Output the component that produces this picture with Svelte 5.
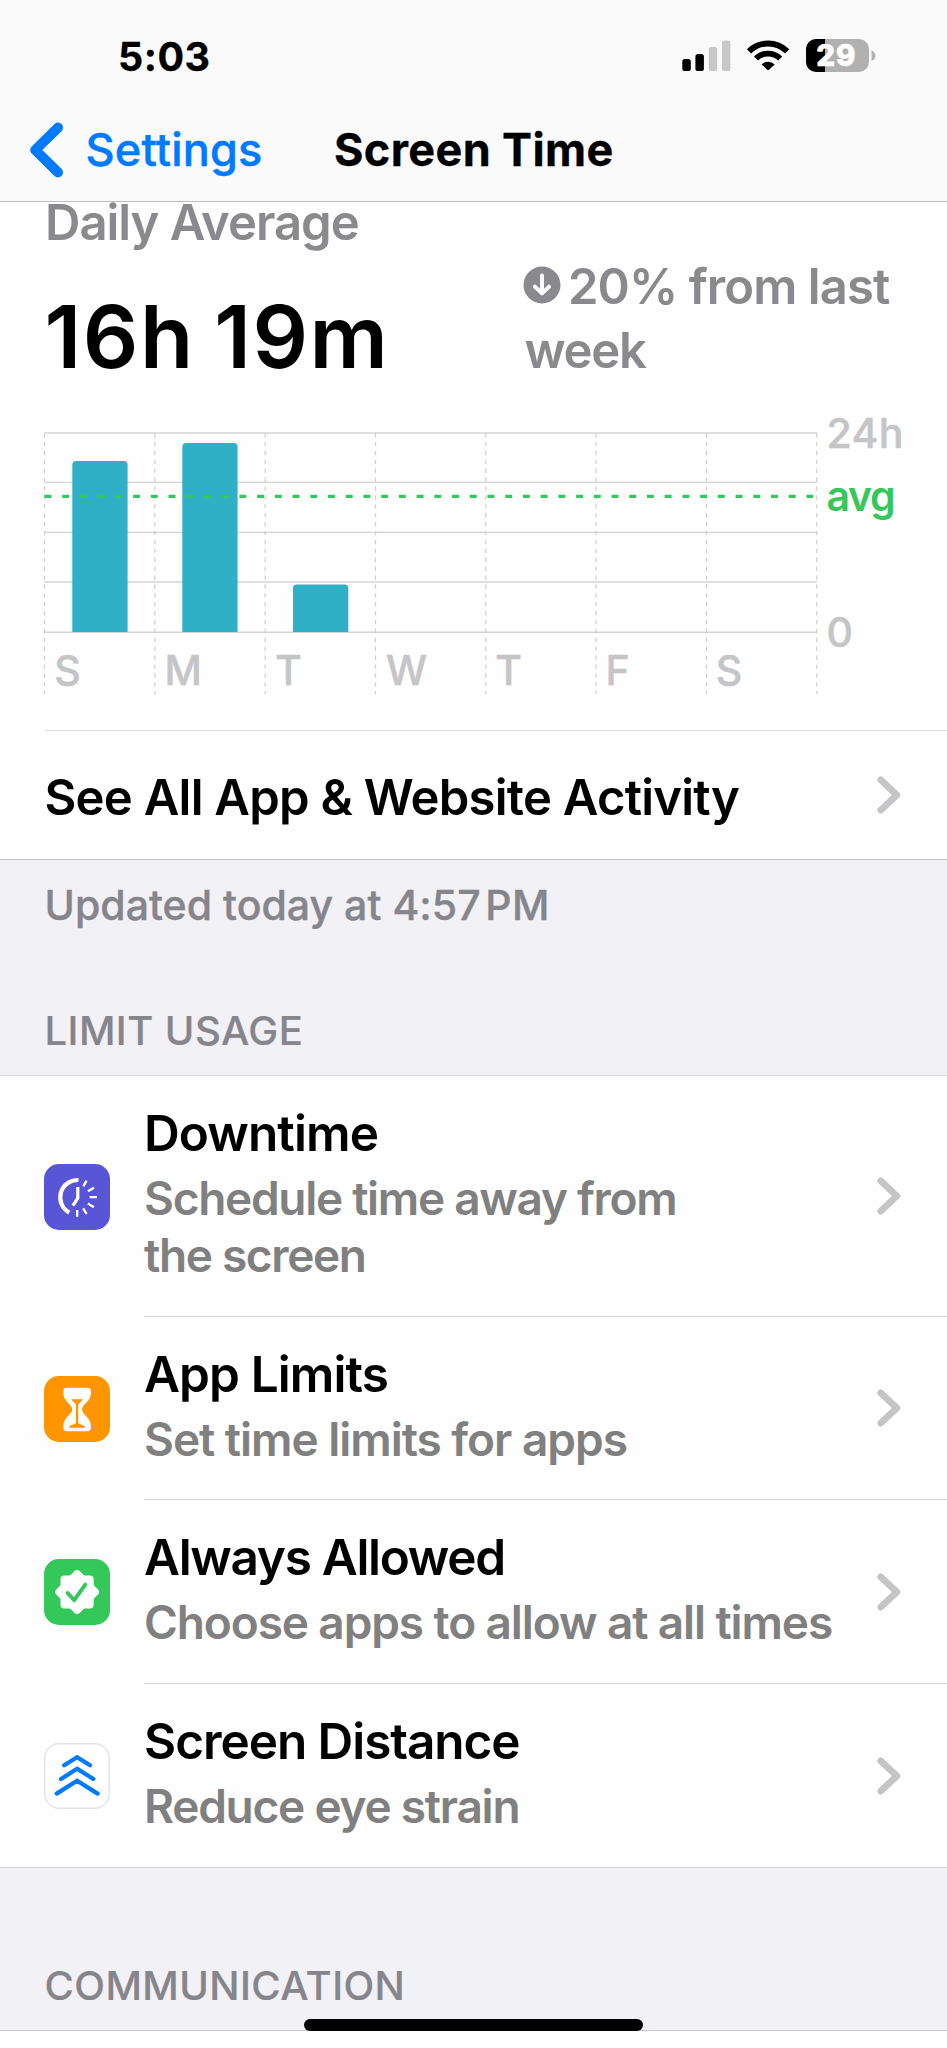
<script>
  const left = 44.5;
  const step = 110.33;
  const base = 632;
  const columns = Array.from({ length: 8 }, (_, i) => left + i * step);
  const gridLines = [433, 482.4, 532.4, 582, 632.3];
  const days = [
    { label: 'S', x: 54.3 },
    { label: 'M', x: 164.6 },
    { label: 'T', x: 275 },
    { label: 'W', x: 386 },
    { label: 'T', x: 495.2 },
    { label: 'F', x: 605.4 },
    { label: 'S', x: 715.8 }
  ];
  const bars = [
    { x: 72.3, top: 461 },
    { x: 182.3, top: 443 },
    { x: 293, top: 584.5 }
  ];

  const limits = [
    { icon: 'downtime', title: 'Downtime', ts: -0.9, lines: [['Schedule time away from', -1.29], ['the screen', -1.35]], height: 241 },
    { icon: 'limits', title: 'App Limits', ts: -0.9, lines: [['Set time limits for apps', -1.02]], height: 183 },
    { icon: 'allowed', title: 'Always Allowed', ts: -1.3, lines: [['Choose apps to allow at all times', -1.11]], height: 184 },
    { icon: 'distance', title: 'Screen Distance', ts: -1.05, lines: [['Reduce eye strain', -1.24]], height: 183 }
  ];
</script>

{#snippet chevron()}
  <svg class="chevron" width="24" height="38" viewBox="0 0 24 38">
    <path d="M3.8 3.9 19.8 19 3.8 34.1" fill="none" stroke="#c5c5c7" stroke-width="6.8" stroke-linecap="round" stroke-linejoin="round" />
  </svg>
{/snippet}

{#snippet icon(name)}
  <svg class="icon" width="66" height="66" viewBox="0 0 66 66">
    {#if name === 'downtime'}
      <rect width="66" height="66" rx="15" fill="#5856d6" />
      <g fill="none" stroke="#fff">
        <path d="M34.5 16A17.4 17.4 0 0 0 25.2 48.6" stroke-width="4.2" />
        <path d="M33.8 23V34.2L28.9 41.6" stroke-width="3.2" stroke-linejoin="round" />
        <path d="M33.2 46V52.8M39.2 44.3 42.6 50M43.9 39.6 49.9 43.2M45.6 33.2H52.8M43.9 27.3 49.9 23.8M39.3 22.4 42.6 16.6" stroke-width="2.3" />
      </g>
    {:else if name === 'limits'}
      <rect width="66" height="66" rx="15" fill="#ff9500" />
      <path fill="#fff" d="M22.7 11.8H43.5Q46.9 11.8 46.9 15.2V17C46.9 25.5 38 28.5 38 33.5S46.9 41.5 46.9 50V51.8Q46.9 55.2 43.5 55.2H22.7Q19.3 55.2 19.3 51.8V50C19.3 41.5 28.2 38.5 28.2 33.5S19.3 25.5 19.3 17V15.2Q19.3 11.8 22.7 11.8Z" />
      <path fill="#ff9500" d="M27.3 23.2H38.9C37.5 26 34.6 27 34.2 28.8V46.8C34.6 48.2 40.6 48.8 41.6 51.8H24.6C25.6 48.8 31.6 48.2 32 46.8V28.8C31.6 27 28.7 26 27.3 23.2Z" />
    {:else if name === 'allowed'}
      <rect width="66" height="66" rx="15" fill="#34c759" />
      <rect x="16.5" y="16.4" width="33.2" height="33.2" rx="4" fill="#fff" />
      <rect x="16.5" y="16.4" width="33.2" height="33.2" rx="4" fill="#fff" transform="rotate(45 33.1 33)" />
      <path d="M23.6 34 30.2 41.2 41.3 25.6" fill="none" stroke="#34c759" stroke-width="3.9" stroke-linecap="round" stroke-linejoin="round" />
    {:else}
      <rect x=".75" y=".75" width="64.5" height="64.5" rx="14.5" fill="#fff" stroke="#e5e5e7" stroke-width="1.5" />
      <g fill="none" stroke="#007aff" stroke-width="4.2" stroke-linecap="round">
        <path d="M20.2 22.3 33.1 14.2 46 22.3M17 36 33.1 25.7 49.4 36M12.7 50.6 33.1 37.8 53.6 50.6" />
      </g>
    {/if}
  </svg>
{/snippet}

<div class="screen">
  <header>
    <div class="status">
      <span class="time">5:03</span>
      <svg class="indicators" width="200" height="40" viewBox="680 36 200 40">
        <rect x="682.3" y="59" width="8.5" height="12" rx="2.6" />
        <rect x="695.4" y="54" width="8.5" height="17" rx="2.6" />
        <rect x="708.8" y="47" width="8.4" height="24" rx="2.6" fill="#c7c7c7" />
        <rect x="722" y="40.5" width="8.4" height="30.5" rx="2.6" fill="#c7c7c7" />
        <g fill="none" stroke="#000">
          <path d="M749 51.3A27.3 27.3 0 0 1 787.2 51.3" stroke-width="6" />
          <path d="M756 58.5A17.4 17.4 0 0 1 780.2 58.5" stroke-width="5.8" />
        </g>
        <path d="M761.6 64.4A9.4 9.4 0 0 1 774.6 64.4L769 69.8Q768.1 70.6 767.2 69.8Z" />
        <rect x="806" y="39" width="63" height="33" rx="10" fill="#b1b1b1" />
        <path d="M825 39V72H816A10 10 0 0 1 806 62V49A10 10 0 0 1 816 39Z" />
        <path d="M871.5 50.3Q875.4 52 875.4 55.7T871.5 61Z" fill="#b1b1b1" />
        <text x="816.2" y="66.2" fill="#fff" stroke="#fff" stroke-width=".6" font-size="29.5" font-weight="800" letter-spacing="1">29</text>
      </svg>
    </div>
    <nav>
      <svg width="36" height="56" viewBox="0 0 36 56">
        <path d="M29 5.6 6.2 28 29 50.4" fill="none" stroke="#007aff" stroke-width="10" stroke-linecap="round" stroke-linejoin="round" />
      </svg>
      <span class="back">Settings</span>
      <h1>Screen Time</h1>
    </nav>
  </header>

  <section class="summary">
    <div class="caption">Daily Average</div>
    <div class="figures">
      <div class="total">16h 19m</div>
      <div class="change">
        <div class="change-line">
          <svg width="38" height="38" viewBox="0 0 38 38">
            <circle cx="19" cy="19" r="18.5" fill="#8a8a8e" />
            <path d="M19 9.5V27M11.8 20.6 19 27.4 26.2 20.6" fill="none" stroke="#fff" stroke-width="4" stroke-linecap="round" stroke-linejoin="round" />
          </svg>
          <span>20% from last</span>
        </div>
        <div class="week">week</div>
      </div>
    </div>

    <svg class="chart" width="947" height="344" viewBox="0 386 947 344">
      {#each gridLines as y}
        <line x1={left} x2="817" y1={y} y2={y} stroke="#d4d4d6" stroke-width="1.4" />
      {/each}
      {#each columns as x}
        <line x1={x} x2={x} y1="433" y2="694" stroke="#cfcfd1" stroke-width="1.2" stroke-dasharray="4.4 4.5" />
      {/each}
      {#each bars as b}
        <path d="M{b.x} {base}V{b.top + 4}Q{b.x} {b.top} {b.x + 4} {b.top}H{b.x + 51.3}Q{b.x + 55.3} {b.top} {b.x + 55.3} {b.top + 4}V{base}Z" fill="#30b0c7" />
      {/each}
      <line x1={left} x2="813" y1="496.4" y2="496.4" stroke="#34c759" stroke-width="3.4" stroke-dasharray="6.9 10.82" />
      {#each days as d}
        <text x={d.x} y="685" class="tick">{d.label}</text>
      {/each}
      <text x="826.5" y="447.6" class="tick" letter-spacing=".3">24h</text>
      <text x="826.5" y="511" class="tick avg" letter-spacing="-1.3">avg</text>
      <text x="826.5" y="647" class="tick">0</text>
    </svg>

    <div class="link-row">
      <span>See All App &amp; Website Activity</span>
      {@render chevron()}
    </div>
  </section>

  <div class="between">
    <p class="updated">Updated today at 4:57<span>PM</span></p>
    <h2>LIMIT USAGE</h2>
  </div>

  <section class="list">
    {#each limits as item}
      <div class="row" style="height: {item.height}px">
        {@render icon(item.icon)}
        <div class="body">
          <div class="text">
            <div class="title" style="letter-spacing: {item.ts}px">{item.title}</div>
            {#each item.lines as [line, spacing]}
              <div class="sub" style="letter-spacing: {spacing}px">{line}</div>
            {/each}
          </div>
          {@render chevron()}
        </div>
      </div>
    {/each}
  </section>

  <div class="footer">
    <h2>COMMUNICATION</h2>
  </div>
  <div class="home"></div>
</div>

<style>
  :global(body) {
    margin: 0;
    background: #fff;
  }

  .screen {
    position: relative;
    width: 947px;
    height: 2048px;
    overflow: hidden;
    background: #fefefe;
    color: #000;
    font-family: Inter, "Liberation Sans", sans-serif;
    white-space: nowrap;
  }

  svg {
    display: block;
    flex: none;
  }

  h1,
  h2,
  p {
    margin: 0;
  }

  header {
    position: relative;
    z-index: 1;
    box-sizing: border-box;
    height: 202px;
    background: #fafafa;
    border-bottom: 1px solid #bdbdbf;
  }

  .status {
    box-sizing: border-box;
    display: flex;
    justify-content: space-between;
    height: 120px;
    padding: 32px 67px 0 118px;
  }

  .time {
    font-size: 39.5px;
    font-weight: 700;
    line-height: 50px;
    letter-spacing: 0.5px;
    -webkit-text-stroke: 0.3px currentColor;
  }

  .indicators {
    margin-top: 4px;
  }

  nav {
    display: flex;
    align-items: flex-start;
    padding-left: 29px;
  }

  nav svg {
    margin-top: 2px;
  }

  .back {
    width: 249px;
    padding-left: 20.5px;
    box-sizing: border-box;
    color: #007aff;
    font-size: 45px;
    font-weight: 500;
    line-height: 60px;
    letter-spacing: 0.19px;
    -webkit-text-stroke: 0.5px currentColor;
  }

  h1 {
    margin-left: 20px;
    font-size: 45px;
    font-weight: 700;
    line-height: 60px;
    letter-spacing: 0.37px;
    -webkit-text-stroke: 0.3px currentColor;
  }

  .summary {
    margin-top: -10px;
    border-bottom: 1px solid #c8c8cc;
    height: 667px;
  }

  .caption {
    box-sizing: border-box;
    height: 60px;
    padding: 1px 0 0 45px;
    color: #8a8a8e;
    font-size: 49px;
    font-weight: 600;
    line-height: 60px;
    letter-spacing: -1px;
  }

  .figures {
    display: flex;
    height: 134px;
  }

  .total {
    box-sizing: border-box;
    width: 523px;
    padding: 35px 0 0 44.5px;
    font-size: 87px;
    font-weight: 600;
    line-height: 100px;
    letter-spacing: 1.5px;
    word-spacing: -4px;
  }

  .change {
    padding-top: 3px;
    color: #8a8a8e;
    font-size: 49px;
    font-weight: 600;
    line-height: 64px;
    letter-spacing: -0.92px;
  }

  .change-line {
    display: flex;
    align-items: center;
    gap: 7px;
  }

  .change-line svg {
    margin-top: -4px;
  }

  .week {
    padding-left: 1.5px;
    letter-spacing: -1.3px;
  }

  .tick {
    fill: #c5c5c7;
    stroke: #c5c5c7;
    stroke-width: 0.5px;
    font-size: 41px;
    font-weight: 500;
  }

  .avg {
    fill: #34c759;
    stroke: none;
    font-weight: 600;
  }

  .link-row {
    box-sizing: border-box;
    display: flex;
    align-items: center;
    justify-content: space-between;
    height: 129px;
    margin-left: 44.5px;
    padding-right: 46px;
    border-top: 1px solid #dcdcde;
    font-size: 49px;
    font-weight: 600;
    line-height: 60px;
    letter-spacing: -0.75px;
  }

  .link-row span {
    padding-top: 5px;
  }

  .between {
    box-sizing: border-box;
    height: 216px;
    padding: 20px 0 0 44.5px;
    border-bottom: 1px solid #d6d6da;
    background: #f2f1f6;
  }

  .updated {
    height: 126px;
    color: #85858b;
    font-size: 41px;
    font-weight: 500;
    line-height: 50px;
    letter-spacing: 0.04px;
    -webkit-text-stroke: 0.4px currentColor;
  }

  .updated span {
    margin-left: 4.5px;
    letter-spacing: 0.4px;
  }

  h2 {
    color: #85858b;
    font-size: 40px;
    font-weight: 500;
    line-height: 50px;
    letter-spacing: 0.44px;
    -webkit-text-stroke: 0.2px currentColor;
  }

  .row {
    display: flex;
    align-items: center;
    padding-left: 44px;
  }

  .icon {
    margin-right: 34px;
  }

  .body {
    box-sizing: border-box;
    flex: 1;
    display: flex;
    align-items: center;
    justify-content: space-between;
    height: 100%;
    padding-right: 46px;
    border-bottom: 1px solid #d6d6d8;
  }

  .row:last-child .body {
    border-bottom: 0;
  }

  .text {
    align-self: flex-start;
    padding-top: 27px;
  }

  .title {
    margin-bottom: 7px;
    font-size: 49.5px;
    font-weight: 600;
    line-height: 60px;
  }

  .sub {
    color: #808080;
    font-size: 46px;
    font-weight: 600;
    line-height: 57px;
  }

  .footer {
    box-sizing: border-box;
    height: 164px;
    padding: 93px 0 0 44.5px;
    border-top: 1px solid #d6d6da;
    border-bottom: 1px solid #c8c8cc;
    background: #f2f1f6;
  }

  .home {
    position: absolute;
    left: 304px;
    top: 2019px;
    width: 339px;
    height: 11.5px;
    border-radius: 6px;
    background: #000;
  }
</style>
